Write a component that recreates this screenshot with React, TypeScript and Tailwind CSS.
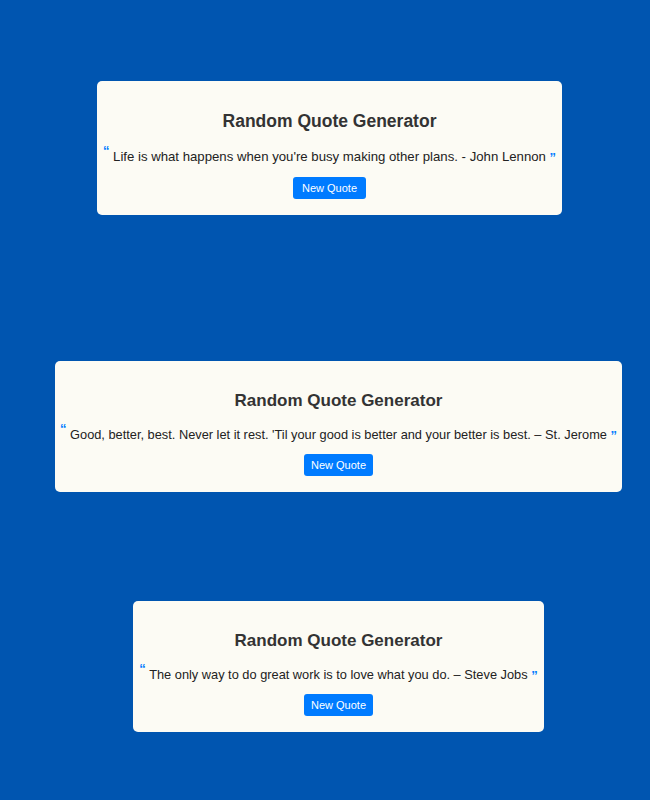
import React from "react";

const font = { fontFamily: '"Liberation Sans", Arial, sans-serif' };

function Card({
  quote,
  cls,
  big,
}: {
  quote: string;
  cls: string;
  big?: boolean;
}) {
  return (
    <div
      className={`rounded-[5px] bg-[#fcfbf4] text-center ${
        big ? "pt-[30px] pb-[16px]" : "pt-[29px] pb-[16px]"
      } ${cls}`}
    >
      <h1
        className={`font-bold leading-[21px] text-[#333333] ${
          big ? "text-[17.5px]" : "text-[17px]"
        }`}
      >
        Random Quote Generator
      </h1>
      <p
        className={`whitespace-nowrap leading-[15px] text-[#222222] ${
          big ? "mt-[11px] text-[13.2px]" : "mt-[10px] text-[12.8px]"
        }`}
      >
        <span className="align-[6px] text-[13px] font-bold text-[#007bff]">“</span> {quote}{" "}
        <span className="align-[-1px] text-[13px] font-bold text-[#007bff]">”</span>
      </p>
      <button
        className={`h-[22px] rounded-[3px] bg-[#007bff] text-[11px] leading-[22px] text-white ${
          big ? "mt-[12px] px-[9px]" : "mt-[11px] px-[7px]"
        }`}
      >
        New Quote
      </button>
    </div>
  );
}

export default function App() {
  return (
    <div style={font} className="flex min-h-[800px] w-full flex-col items-start bg-[#0055b0] pt-[81px]">
      <Card
        big
        cls="ml-[97px] w-[465px]"
        quote="Life is what happens when you're busy making other plans. - John Lennon"
      />
      <Card
        cls="ml-[55px] mt-[146px] w-[567px]"
        quote="Good, better, best. Never let it rest. 'Til your good is better and your better is best. – St. Jerome"
      />
      <Card
        cls="ml-[133px] mt-[109px] w-[411px]"
        quote="The only way to do great work is to love what you do. – Steve Jobs"
      />
    </div>
  );
}
